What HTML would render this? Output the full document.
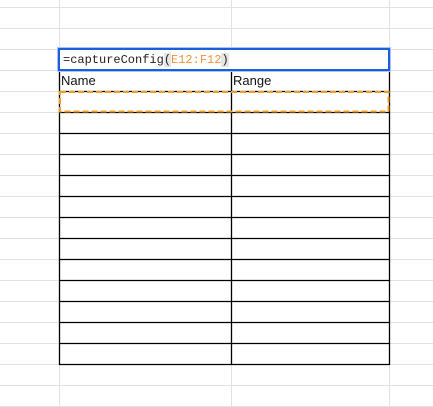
<!DOCTYPE html><html><head><style>
body{margin:0;width:433px;height:407px;background:#fff;position:relative;overflow:hidden;font-family:"Liberation Sans",sans-serif}
.a{position:absolute}
.m{font-family:"Liberation Mono","DejaVu Sans Mono",monospace;font-size:12px}
</style></head><body>
<svg class="a" style="left:0;top:0" width="433" height="407">
<g stroke="#e2e2e2" stroke-width="1">
<line x1="59.5" y1="0" x2="59.5" y2="407"/><line x1="231.5" y1="0" x2="231.5" y2="407"/><line x1="389.5" y1="0" x2="389.5" y2="407"/>
<line x1="0" y1="7.5" x2="433" y2="7.5"/><line x1="0" y1="28.5" x2="433" y2="28.5"/><line x1="0" y1="49.5" x2="433" y2="49.5"/><line x1="0" y1="70.5" x2="433" y2="70.5"/><line x1="0" y1="91.5" x2="433" y2="91.5"/><line x1="0" y1="112.5" x2="433" y2="112.5"/><line x1="0" y1="133.5" x2="433" y2="133.5"/><line x1="0" y1="154.5" x2="433" y2="154.5"/><line x1="0" y1="175.5" x2="433" y2="175.5"/><line x1="0" y1="196.5" x2="433" y2="196.5"/><line x1="0" y1="217.5" x2="433" y2="217.5"/><line x1="0" y1="238.5" x2="433" y2="238.5"/><line x1="0" y1="259.5" x2="433" y2="259.5"/><line x1="0" y1="280.5" x2="433" y2="280.5"/><line x1="0" y1="301.5" x2="433" y2="301.5"/><line x1="0" y1="322.5" x2="433" y2="322.5"/><line x1="0" y1="343.5" x2="433" y2="343.5"/><line x1="0" y1="364.5" x2="433" y2="364.5"/><line x1="0" y1="385.5" x2="433" y2="385.5"/><line x1="0" y1="406.5" x2="433" y2="406.5"/>
</g>
<g stroke="#000" stroke-width="1.3">
<line x1="59.5" y1="70" x2="59.5" y2="365"/><line x1="231.5" y1="70" x2="231.5" y2="365"/><line x1="389.5" y1="70" x2="389.5" y2="365"/>
<line x1="59" y1="91.5" x2="390" y2="91.5"/><line x1="59" y1="112.5" x2="390" y2="112.5"/><line x1="59" y1="133.5" x2="390" y2="133.5"/><line x1="59" y1="154.5" x2="390" y2="154.5"/><line x1="59" y1="175.5" x2="390" y2="175.5"/><line x1="59" y1="196.5" x2="390" y2="196.5"/><line x1="59" y1="217.5" x2="390" y2="217.5"/><line x1="59" y1="238.5" x2="390" y2="238.5"/><line x1="59" y1="259.5" x2="390" y2="259.5"/><line x1="59" y1="280.5" x2="390" y2="280.5"/><line x1="59" y1="301.5" x2="390" y2="301.5"/><line x1="59" y1="322.5" x2="390" y2="322.5"/><line x1="59" y1="343.5" x2="390" y2="343.5"/><line x1="59" y1="364.5" x2="390" y2="364.5"/>
</g>
<rect x="60" y="92" width="328.5" height="19.5" fill="none" stroke="#f39c1e" stroke-width="2" stroke-dasharray="6,3"/>
<rect x="57.5" y="47.5" width="333" height="24" fill="#fff" stroke="#a9c4f5" stroke-width="1"/>
<rect x="59" y="49" width="330" height="21" fill="#fff" stroke="#1b5fd8" stroke-width="2"/>
</svg>
<div class="a m" style="left:63px;top:52px;line-height:17px;color:#222;white-space:pre">=captureConfig<span style="background:#e6e6e6">(</span><span style="color:#f0923d">E12:F12</span><span style="background:#e6e6e6">)</span></div>
<div class="a" style="left:61px;top:73px;font-size:13px;line-height:16px;color:#111">Name</div>
<div class="a" style="left:233px;top:73px;font-size:13px;line-height:16px;color:#111">Range</div>
</body></html>
